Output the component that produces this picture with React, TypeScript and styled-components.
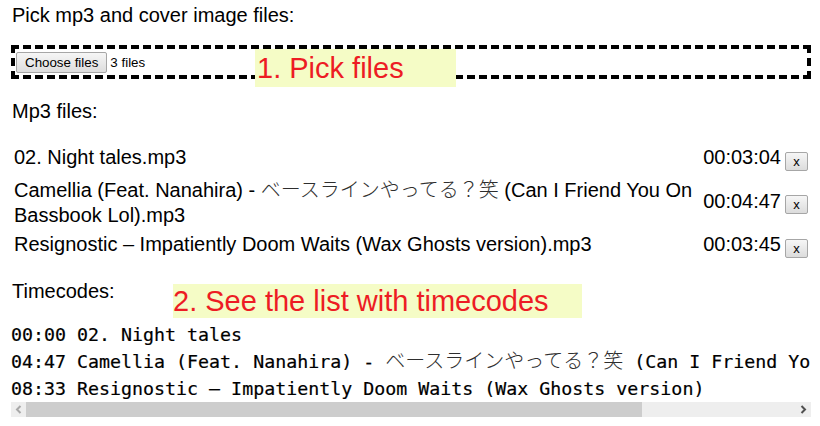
import React from "react";
import styled, { createGlobalStyle } from "styled-components";

const GlobalStyle = createGlobalStyle`
  html, body {
    margin: 0;
    padding: 0;
    background: #ffffff;
  }
  body {
    font-family: "Liberation Sans", Arial, "Noto Sans CJK JP", sans-serif;
    font-size: 20px;
    color: #000000;
  }
`;

const Page = styled.div`
  position: relative;
  width: 800px;
  padding: 4px 9px 0 11px;
`;

const Heading = styled.p<{ $gap?: number }>`
  margin: ${(p) => p.$gap ?? 0}px 0 0 0;
  padding-left: 1px;
  line-height: 23px;
  font-size: 20px;
`;

const DropZone = styled.div`
  margin-top: 18px;
  height: 26px;
  border: 4px dashed #000000;
  display: flex;
  align-items: center;
  gap: 3px;
  padding: 0 1px;
`;

const ChooseButton = styled.button`
  height: 21px;
  padding: 0 8px;
  font-family: "Liberation Sans", Arial, sans-serif;
  font-size: 13.33px;
  color: #000000;
  background: linear-gradient(#f6f6f6, #dddddd);
  border: 1px solid #a6a6a6;
  border-radius: 2px;
`;

const FileCount = styled.span`
  font-size: 13.33px;
`;

const TrackTable = styled.table`
  width: 100%;
  margin-top: 19px;
  border-spacing: 2px;
  font-size: 20px;
  line-height: 25px;
`;

const NameCell = styled.td`
  padding: 1px;
  vertical-align: middle;
`;

const TimeCell = styled.td`
  padding: 1px;
  vertical-align: middle;
  white-space: nowrap;
  width: 1px;
`;

const RemoveCell = styled.td`
  padding: 7px 1px 0 1px;
  vertical-align: middle;
  width: 1px;
`;

const RemoveButton = styled.button`
  display: block;
  width: 23px;
  height: 19px;
  padding: 0;
  font-family: "Liberation Sans", Arial, sans-serif;
  font-size: 13px;
  line-height: 15px;
  color: #000000;
  background: linear-gradient(#f6f6f6, #dcdcdc);
  border: 1px solid #a6a6a6;
  border-radius: 2px;
`;

const Jp = styled.span`
  font-family: "Noto Sans CJK JP", sans-serif;
  font-weight: 300;
  line-height: normal;
  color: #2e2e2e;
`;

const MonoJp = styled.span`
  font-family: "Noto Sans CJK JP", sans-serif;
  font-weight: 300;
  font-size: 20px;
  line-height: 24px;
  color: #2e2e2e;
  -webkit-text-stroke: 0;
`;

const TimecodeBox = styled.div`
  margin-top: 14px;
  width: 800px;
`;

const Timecodes = styled.pre`
  margin: 0;
  padding-top: 4px;
  overflow: hidden;
  font-family: "DejaVu Sans Mono", "Liberation Mono", monospace;
  font-size: 18.3px;
  line-height: 27px;
  font-weight: 400;
  -webkit-text-stroke: 0.2px #000000;
  white-space: pre;
`;

const ScrollBar = styled.div`
  display: flex;
  height: 15px;
  background: #eeeeee;
`;

const ScrollArrow = styled.div`
  width: 15px;
  flex: none;
  display: flex;
  align-items: center;
  justify-content: center;
  background: #eeeeee;
`;

const ScrollTrack = styled.div`
  flex: 1;
  display: flex;
`;

const ScrollThumb = styled.div`
  height: 15px;
  background: #cdcdcd;
`;

const Note = styled.div<{ $x: number; $y: number; $w: number; $h: number; $pad: number }>`
  position: absolute;
  left: ${(p) => p.$x}px;
  top: ${(p) => p.$y}px;
  width: ${(p) => p.$w}px;
  height: ${(p) => p.$h}px;
  box-sizing: border-box;
  padding-left: ${(p) => p.$pad}px;
  display: flex;
  align-items: center;
  background: #f5fcc6;
  color: #ed1c24;
  font-family: "Liberation Sans", Arial, sans-serif;
  font-size: 29px;
  white-space: nowrap;
`;

type Track = { name: React.ReactNode; time: string };

const tracks: Track[] = [
  { name: "02. Night tales.mp3", time: "00:03:04" },
  {
    name: (
      <>
        Camellia (Feat. Nanahira) - <Jp>ベースラインやってる？笑</Jp> (Can I Friend You On Bassbook Lol).mp3
      </>
    ),
    time: "00:04:47",
  },
  {
    name: "Resignostic \u2013 Impatiently Doom Waits (Wax Ghosts version).mp3",
    time: "00:03:45",
  },
];

const Chevron = ({ dir, color }: { dir: "left" | "right"; color: string }) => (
  <svg width="7" height="9" viewBox="0 0 7 9">
    <path
      d={dir === "left" ? "M5.5 1 L2 4.5 L5.5 8" : "M1.5 1 L5 4.5 L1.5 8"}
      fill="none"
      stroke={color}
      strokeWidth="2"
    />
  </svg>
);

const visibleRatio = 0.8;

export default function App() {
  return (
    <>
      <GlobalStyle />
      <Page>
        <Heading>Pick mp3 and cover image files:</Heading>
        <DropZone>
          <ChooseButton type="button">Choose files</ChooseButton>
          <FileCount>3 files</FileCount>
        </DropZone>
        <Heading $gap={21}>Mp3 files:</Heading>
        <TrackTable>
          <tbody>
            {tracks.map((t, i) => (
              <tr key={i}>
                <NameCell>{t.name}</NameCell>
                <TimeCell>{t.time}</TimeCell>
                <RemoveCell>
                  <RemoveButton type="button">x</RemoveButton>
                </RemoveCell>
              </tr>
            ))}
          </tbody>
        </TrackTable>
        <Heading $gap={20}>Timecodes:</Heading>
        <TimecodeBox>
          <Timecodes>
            {"00:00 02. Night tales\n"}
            {"04:47 Camellia (Feat. Nanahira) - "}
            <MonoJp>ベースラインやってる？笑</MonoJp>
            {" (Can I Friend You On Bassbook Lol)\n"}
            {"08:33 Resignostic \u2013 Impatiently Doom Waits (Wax Ghosts version)"}
          </Timecodes>
          <ScrollBar>
            <ScrollArrow>
              <Chevron dir="left" color="#a8a8a8" />
            </ScrollArrow>
            <ScrollTrack>
              <ScrollThumb style={{ width: `${visibleRatio * 100}%` }} />
            </ScrollTrack>
            <ScrollArrow>
              <Chevron dir="right" color="#505050" />
            </ScrollArrow>
          </ScrollBar>
        </TimecodeBox>
        <Note $x={255} $y={49} $w={201} $h={38} $pad={2}>1. Pick files</Note>
        <Note $x={173} $y={284} $w={409} $h={34} $pad={0}>2. See the list with timecodes</Note>
      </Page>
    </>
  );
}
